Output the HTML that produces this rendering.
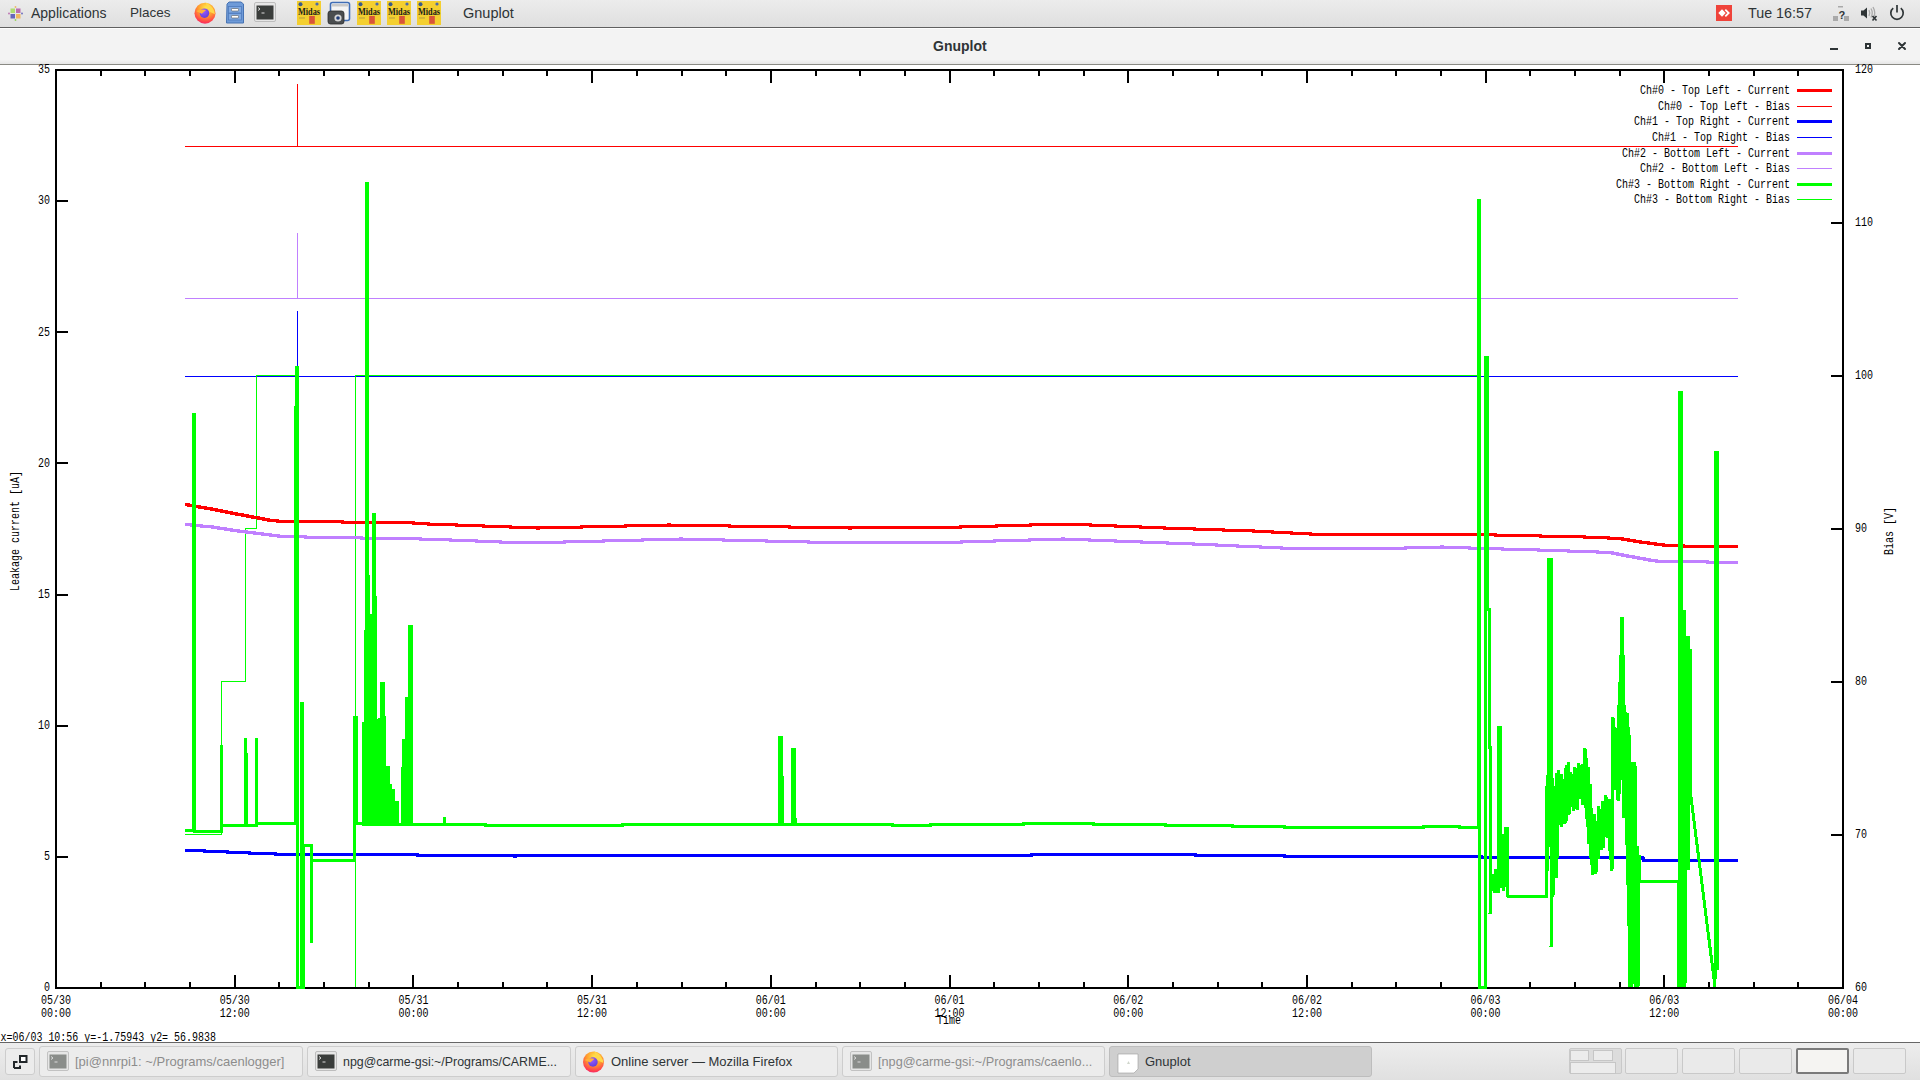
<!DOCTYPE html>
<html><head><meta charset="utf-8"><style>
html,body{margin:0;padding:0;width:1920px;height:1080px;overflow:hidden;background:#fff;font-family:"Liberation Sans",sans-serif;}
.abs{position:absolute;}
#top{left:0;top:0;width:1920px;height:27px;background:linear-gradient(#ececec,#dfdfdf);border-bottom:1px solid #606060;}
#title{left:0;top:28px;width:1920px;height:36px;background:linear-gradient(#f3f3f3 88%,#e6e6e6);border-top:1px solid #fdfdfd;box-sizing:border-box;}
#tline{left:0;top:64px;width:1920px;height:1px;background:#8a8a84;}
.tb{color:#2e3436;font-size:14px;top:4px;line-height:18px;white-space:nowrap;}
#bottom{left:0;top:1042px;width:1920px;height:38px;background:linear-gradient(#ededed,#e0e0e0);border-top:1px solid #666;box-sizing:border-box;}
.btn{top:1046px;height:31px;box-sizing:border-box;border:1px solid #cdcdcd;border-radius:3px;background:#ececec;font-size:13px;line-height:30px;color:#2e3436;white-space:nowrap;overflow:hidden;}
.ws{top:1048px;height:26px;width:53px;box-sizing:border-box;border:1px solid #c9c9c9;border-radius:2px;background:#eaeaea;}
svg{position:absolute;left:0;top:0;}
</style></head><body>
<div class="abs" id="top"></div>
<div class="abs" id="title"></div>
<div class="abs" id="tline"></div>
<div class="abs tb" style="left:31px;font-size:14px;">Applications</div>
<div class="abs tb" style="left:130px;font-size:13.5px;">Places</div>
<div class="abs tb" style="left:463px;font-size:14.5px;">Gnuplot</div>
<div class="abs tb" style="left:1748px;font-size:14.3px;">Tue 16:57</div>
<div class="abs" style="left:933px;top:37px;font-size:14px;font-weight:bold;color:#2e3436;line-height:18px;">Gnuplot</div>
<svg width="1920" height="1080" viewBox="0 0 1920 1080">
<g shape-rendering="crispEdges" stroke="#000" stroke-width="2" fill="none">
<path d="M56.0 70.0 H1843.0 V988.0 H56.0 Z"/>
<path d="M100.7 988.0 v-6 M100.7 70.0 v6 M145.3 988.0 v-6 M145.3 70.0 v6 M190.0 988.0 v-6 M190.0 70.0 v6 M234.7 988.0 v-13 M234.7 70.0 v13 M279.4 988.0 v-6 M279.4 70.0 v6 M324.1 988.0 v-6 M324.1 70.0 v6 M368.7 988.0 v-6 M368.7 70.0 v6 M413.4 988.0 v-13 M413.4 70.0 v13 M458.1 988.0 v-6 M458.1 70.0 v6 M502.8 988.0 v-6 M502.8 70.0 v6 M547.4 988.0 v-6 M547.4 70.0 v6 M592.1 988.0 v-13 M592.1 70.0 v13 M636.8 988.0 v-6 M636.8 70.0 v6 M681.5 988.0 v-6 M681.5 70.0 v6 M726.1 988.0 v-6 M726.1 70.0 v6 M770.8 988.0 v-13 M770.8 70.0 v13 M815.5 988.0 v-6 M815.5 70.0 v6 M860.1 988.0 v-6 M860.1 70.0 v6 M904.8 988.0 v-6 M904.8 70.0 v6 M949.5 988.0 v-13 M949.5 70.0 v13 M994.2 988.0 v-6 M994.2 70.0 v6 M1038.8 988.0 v-6 M1038.8 70.0 v6 M1083.5 988.0 v-6 M1083.5 70.0 v6 M1128.2 988.0 v-13 M1128.2 70.0 v13 M1172.9 988.0 v-6 M1172.9 70.0 v6 M1217.5 988.0 v-6 M1217.5 70.0 v6 M1262.2 988.0 v-6 M1262.2 70.0 v6 M1306.9 988.0 v-13 M1306.9 70.0 v13 M1351.6 988.0 v-6 M1351.6 70.0 v6 M1396.2 988.0 v-6 M1396.2 70.0 v6 M1440.9 988.0 v-6 M1440.9 70.0 v6 M1485.6 988.0 v-13 M1485.6 70.0 v13 M1530.3 988.0 v-6 M1530.3 70.0 v6 M1575.0 988.0 v-6 M1575.0 70.0 v6 M1619.6 988.0 v-6 M1619.6 70.0 v6 M1664.3 988.0 v-13 M1664.3 70.0 v13 M1709.0 988.0 v-6 M1709.0 70.0 v6 M1753.7 988.0 v-6 M1753.7 70.0 v6 M1798.3 988.0 v-6 M1798.3 70.0 v6 M56.0 856.9 h12 M56.0 725.7 h12 M56.0 594.6 h12 M56.0 463.4 h12 M56.0 332.3 h12 M56.0 201.1 h12 M1843.0 835.0 h-12 M1843.0 682.0 h-12 M1843.0 529.0 h-12 M1843.0 376.0 h-12 M1843.0 223.0 h-12"/>
</g>
<g font-family="Liberation Mono" font-size="13.5" fill="#000">
<text x="44.0" y="991.2" textLength="6.0" lengthAdjust="spacingAndGlyphs" >0</text>
<text x="44.0" y="860.1" textLength="6.0" lengthAdjust="spacingAndGlyphs" >5</text>
<text x="38.0" y="728.9" textLength="12.0" lengthAdjust="spacingAndGlyphs" >10</text>
<text x="38.0" y="597.8" textLength="12.0" lengthAdjust="spacingAndGlyphs" >15</text>
<text x="38.0" y="466.6" textLength="12.0" lengthAdjust="spacingAndGlyphs" >20</text>
<text x="38.0" y="335.5" textLength="12.0" lengthAdjust="spacingAndGlyphs" >25</text>
<text x="38.0" y="204.3" textLength="12.0" lengthAdjust="spacingAndGlyphs" >30</text>
<text x="38.0" y="73.2" textLength="12.0" lengthAdjust="spacingAndGlyphs" >35</text>
<text x="1855.0" y="991.2" textLength="12.0" lengthAdjust="spacingAndGlyphs" >60</text>
<text x="1855.0" y="838.2" textLength="12.0" lengthAdjust="spacingAndGlyphs" >70</text>
<text x="1855.0" y="685.2" textLength="12.0" lengthAdjust="spacingAndGlyphs" >80</text>
<text x="1855.0" y="532.2" textLength="12.0" lengthAdjust="spacingAndGlyphs" >90</text>
<text x="1855.0" y="379.2" textLength="18.0" lengthAdjust="spacingAndGlyphs" >100</text>
<text x="1855.0" y="226.2" textLength="18.0" lengthAdjust="spacingAndGlyphs" >110</text>
<text x="1855.0" y="73.2" textLength="18.0" lengthAdjust="spacingAndGlyphs" >120</text>
<text x="41.0" y="1004.0" textLength="30.0" lengthAdjust="spacingAndGlyphs" >05/30</text>
<text x="41.0" y="1017.0" textLength="30.0" lengthAdjust="spacingAndGlyphs" >00:00</text>
<text x="219.7" y="1004.0" textLength="30.0" lengthAdjust="spacingAndGlyphs" >05/30</text>
<text x="219.7" y="1017.0" textLength="30.0" lengthAdjust="spacingAndGlyphs" >12:00</text>
<text x="398.4" y="1004.0" textLength="30.0" lengthAdjust="spacingAndGlyphs" >05/31</text>
<text x="398.4" y="1017.0" textLength="30.0" lengthAdjust="spacingAndGlyphs" >00:00</text>
<text x="577.1" y="1004.0" textLength="30.0" lengthAdjust="spacingAndGlyphs" >05/31</text>
<text x="577.1" y="1017.0" textLength="30.0" lengthAdjust="spacingAndGlyphs" >12:00</text>
<text x="755.8" y="1004.0" textLength="30.0" lengthAdjust="spacingAndGlyphs" >06/01</text>
<text x="755.8" y="1017.0" textLength="30.0" lengthAdjust="spacingAndGlyphs" >00:00</text>
<text x="934.5" y="1004.0" textLength="30.0" lengthAdjust="spacingAndGlyphs" >06/01</text>
<text x="934.5" y="1017.0" textLength="30.0" lengthAdjust="spacingAndGlyphs" >12:00</text>
<text x="1113.2" y="1004.0" textLength="30.0" lengthAdjust="spacingAndGlyphs" >06/02</text>
<text x="1113.2" y="1017.0" textLength="30.0" lengthAdjust="spacingAndGlyphs" >00:00</text>
<text x="1291.9" y="1004.0" textLength="30.0" lengthAdjust="spacingAndGlyphs" >06/02</text>
<text x="1291.9" y="1017.0" textLength="30.0" lengthAdjust="spacingAndGlyphs" >12:00</text>
<text x="1470.6" y="1004.0" textLength="30.0" lengthAdjust="spacingAndGlyphs" >06/03</text>
<text x="1470.6" y="1017.0" textLength="30.0" lengthAdjust="spacingAndGlyphs" >00:00</text>
<text x="1649.3" y="1004.0" textLength="30.0" lengthAdjust="spacingAndGlyphs" >06/03</text>
<text x="1649.3" y="1017.0" textLength="30.0" lengthAdjust="spacingAndGlyphs" >12:00</text>
<text x="1828.0" y="1004.0" textLength="30.0" lengthAdjust="spacingAndGlyphs" >06/04</text>
<text x="1828.0" y="1017.0" textLength="30.0" lengthAdjust="spacingAndGlyphs" >00:00</text>
<text x="937.0" y="1024.0" textLength="24.0" lengthAdjust="spacingAndGlyphs" >Time</text>
<g transform="translate(18.6,531) rotate(-90)"><text x="-60.0" y="0.0" textLength="120.0" lengthAdjust="spacingAndGlyphs" >Leakage current [uA]</text></g>
<g transform="translate(1892.6,531) rotate(-90)"><text x="-24.0" y="0.0" textLength="48.0" lengthAdjust="spacingAndGlyphs" >Bias [V]</text></g>
<text x="1640.0" y="93.6" textLength="150.0" lengthAdjust="spacingAndGlyphs" >Ch#0 - Top Left - Current</text>
<text x="1658.0" y="109.6" textLength="132.0" lengthAdjust="spacingAndGlyphs" >Ch#0 - Top Left - Bias</text>
<text x="1634.0" y="124.6" textLength="156.0" lengthAdjust="spacingAndGlyphs" >Ch#1 - Top Right - Current</text>
<text x="1652.0" y="140.6" textLength="138.0" lengthAdjust="spacingAndGlyphs" >Ch#1 - Top Right - Bias</text>
<text x="1622.0" y="156.6" textLength="168.0" lengthAdjust="spacingAndGlyphs" >Ch#2 - Bottom Left - Current</text>
<text x="1640.0" y="171.6" textLength="150.0" lengthAdjust="spacingAndGlyphs" >Ch#2 - Bottom Left - Bias</text>
<text x="1616.0" y="187.6" textLength="174.0" lengthAdjust="spacingAndGlyphs" >Ch#3 - Bottom Right - Current</text>
<text x="1634.0" y="202.6" textLength="156.0" lengthAdjust="spacingAndGlyphs" >Ch#3 - Bottom Right - Bias</text>
</g>
<g shape-rendering="crispEdges" fill="none">
<path d="M1797 90.5 H1832" stroke="#ff0000" stroke-width="3"/>
<path d="M1797 106.5 H1832" stroke="#ff0000" stroke-width="1"/>
<path d="M1797 121.5 H1832" stroke="#0000ff" stroke-width="3"/>
<path d="M1797 137.5 H1832" stroke="#0000ff" stroke-width="1"/>
<path d="M1797 153.5 H1832" stroke="#c080ff" stroke-width="3"/>
<path d="M1797 168.5 H1832" stroke="#c080ff" stroke-width="1"/>
<path d="M1797 184.5 H1832" stroke="#00ff00" stroke-width="3"/>
<path d="M1797 199.5 H1832" stroke="#00ff00" stroke-width="1"/>
</g>
<g fill="none" stroke-width="1" shape-rendering="crispEdges">
<path d="M185 146.5 H1738 M297.5 146.5 V84" stroke="#ff0000"/>
<path d="M185 298.5 H1738 M297.5 298.5 V233" stroke="#c080ff"/>
<path d="M185 376.5 H1738 M297.5 376.5 V311" stroke="#0000ff"/>
<path d="M185.0 834.5 L221.5 834.5 L221.5 681.5 L245.5 681.5 L245.5 528.5 L256.5 528.5 L256.5 375.5 L296.5 375.5 L296.5 987.0 M355.5 987.0 L355.5 375.5 L1478.5 375.5 L1478.5 987.0" stroke="#00ff00"/>
</g>
<g fill="none" stroke-width="3" shape-rendering="crispEdges" stroke-linejoin="miter">
<path d="M185.0 504.5 L188.0 504.5 L188.0 505.5 L194.0 505.5 L194.0 506.5 L199.0 506.5 L199.0 507.5 L205.0 507.5 L205.0 508.5 L211.0 508.5 L211.0 509.5 L216.0 509.5 L216.0 510.5 L221.0 510.5 L221.0 511.5 L226.0 511.5 L226.0 512.5 L231.0 512.5 L231.0 513.5 L236.0 513.5 L236.0 514.5 L242.0 514.5 L242.0 515.5 L247.0 515.5 L247.0 516.5 L252.0 516.5 L252.0 517.5 L258.0 517.5 L258.0 518.5 L263.0 518.5 L263.0 519.5 L268.0 519.5 L268.0 520.5 L277.0 520.5 L277.0 521.5 L342.0 521.5 L342.0 522.5 L413.0 522.5 L413.0 523.5 L428.0 523.5 L428.0 524.5 L456.0 524.5 L456.0 525.5 L483.0 525.5 L483.0 526.5 L510.0 526.5 L510.0 527.5 L537.0 527.5 L537.0 528.5 L538.0 528.5 L538.0 527.5 L581.0 527.5 L581.0 526.5 L625.0 526.5 L625.0 525.5 L668.0 525.5 L668.0 524.5 L669.0 524.5 L669.0 525.5 L729.0 525.5 L729.0 526.5 L789.0 526.5 L789.0 527.5 L849.0 527.5 L849.0 528.5 L850.0 528.5 L850.0 527.5 L960.0 527.5 L960.0 526.5 L996.0 526.5 L996.0 525.5 L1030.0 525.5 L1030.0 524.5 L1090.0 524.5 L1090.0 525.5 L1115.0 525.5 L1115.0 526.5 L1140.0 526.5 L1140.0 527.5 L1164.0 527.5 L1164.0 528.5 L1194.0 528.5 L1194.0 529.5 L1223.0 529.5 L1223.0 530.5 L1253.0 530.5 L1253.0 531.5 L1272.0 531.5 L1272.0 532.5 L1291.0 532.5 L1291.0 533.5 L1310.0 533.5 L1310.0 534.5 L1495.0 534.5 L1495.0 535.5 L1540.0 535.5 L1540.0 536.5 L1584.0 536.5 L1584.0 537.5 L1608.0 537.5 L1608.0 538.5 L1622.0 538.5 L1622.0 539.5 L1628.0 539.5 L1628.0 540.5 L1634.0 540.5 L1634.0 541.5 L1640.0 541.5 L1640.0 542.5 L1648.0 542.5 L1648.0 543.5 L1655.0 543.5 L1655.0 544.5 L1663.0 544.5 L1663.0 545.5 L1683.0 545.5 L1683.0 546.5 L1738.0 546.5" stroke="#ff0000"/>
<path d="M185.0 524.5 L191.0 524.5 L191.0 525.5 L201.0 525.5 L201.0 526.5 L212.0 526.5 L212.0 527.5 L218.0 527.5 L218.0 528.5 L225.0 528.5 L225.0 529.5 L231.0 529.5 L231.0 530.5 L238.0 530.5 L238.0 531.5 L246.0 531.5 L246.0 532.5 L254.0 532.5 L254.0 533.5 L262.0 533.5 L262.0 534.5 L270.0 534.5 L270.0 535.5 L278.0 535.5 L278.0 536.5 L305.0 536.5 L305.0 537.5 L361.0 537.5 L361.0 538.5 L420.0 538.5 L420.0 539.5 L450.0 539.5 L450.0 540.5 L476.0 540.5 L476.0 541.5 L500.0 541.5 L500.0 542.5 L564.0 542.5 L564.0 541.5 L603.0 541.5 L603.0 540.5 L642.0 540.5 L642.0 539.5 L680.0 539.5 L680.0 538.5 L681.0 538.5 L681.0 539.5 L723.0 539.5 L723.0 540.5 L766.0 540.5 L766.0 541.5 L808.0 541.5 L808.0 542.5 L961.0 542.5 L961.0 541.5 L994.0 541.5 L994.0 540.5 L1029.0 540.5 L1029.0 539.5 L1062.0 539.5 L1062.0 538.5 L1063.0 538.5 L1063.0 539.5 L1089.0 539.5 L1089.0 540.5 L1115.0 540.5 L1115.0 541.5 L1141.0 541.5 L1141.0 542.5 L1167.0 542.5 L1167.0 543.5 L1193.0 543.5 L1193.0 544.5 L1216.0 544.5 L1216.0 545.5 L1237.0 545.5 L1237.0 546.5 L1260.0 546.5 L1260.0 547.5 L1281.0 547.5 L1281.0 548.5 L1405.0 548.5 L1405.0 547.5 L1441.0 547.5 L1441.0 546.5 L1442.0 546.5 L1442.0 547.5 L1469.0 547.5 L1469.0 548.5 L1502.0 548.5 L1502.0 549.5 L1538.0 549.5 L1538.0 550.5 L1568.0 550.5 L1568.0 551.5 L1597.0 551.5 L1597.0 552.5 L1612.0 552.5 L1612.0 553.5 L1617.0 553.5 L1617.0 554.5 L1622.0 554.5 L1622.0 555.5 L1627.0 555.5 L1627.0 556.5 L1633.0 556.5 L1633.0 557.5 L1638.0 557.5 L1638.0 558.5 L1644.0 558.5 L1644.0 559.5 L1649.0 559.5 L1649.0 560.5 L1656.0 560.5 L1656.0 561.5 L1707.0 561.5 L1707.0 562.5 L1738.0 562.5" stroke="#c080ff"/>
<path d="M185.0 850.5 L204.0 850.5 L204.0 851.5 L227.0 851.5 L227.0 852.5 L249.0 852.5 L249.0 853.5 L275.0 853.5 L275.0 854.5 L417.0 854.5 L417.0 855.5 L514.0 855.5 L514.0 856.5 L515.0 856.5 L515.0 855.5 L1031.0 855.5 L1031.0 854.5 L1195.0 854.5 L1195.0 855.5 L1284.0 855.5 L1284.0 856.5 L1481.0 856.5 L1481.0 857.5 L1642.0 857.5 L1642.0 858.5 L1643.0 858.5 L1643.0 860.5 L1738.0 860.5" stroke="#0000ff"/>
<path d="M185.0 830.5 L194.0 830.5 L193.5 831.5 L193.5 414.0 L194.5 414.0 L194.5 831.5 L221.0 831.5 L221.0 825.5 L221.0 746.0 L221.2 746.0 L221.2 825.5 L245.0 825.5 L245.0 739.0 L245.5 739.0 L246.0 754.0 L246.5 754.0 L246.5 825.5 L256.0 825.5 L256.0 823.5 L256.0 739.0 L256.2 739.0 L256.2 823.5 L295.0 823.5 L295.0 407.0 L296.0 407.0 L296.0 367.0 L297.0 367.0 L297.0 987.0 L301.0 987.0 L301.0 703.0 L302.0 703.0 L302.0 987.0 L303.0 987.0 L303.0 845.5 L311.0 845.5 L311.0 943.0 L311.0 860.5 L354.0 860.5 L354.0 769.0 L355.0 717.0 L356.0 717.0 L356.0 823.5 L363.0 823.5 L363.0 824.5 L363.0 723.0 L363.5 723.0 L363.5 824.5 L364.0 824.5 L364.0 723.0 L364.5 723.0 L364.5 760.0 L365.0 824.5 L365.0 631.0 L365.5 631.0 L365.5 824.5 L366.0 824.5 L366.0 183.0 L366.5 183.0 L366.5 760.0 L367.0 824.5 L367.0 183.0 L367.5 183.0 L367.5 824.5 L368.0 824.5 L368.0 576.0 L368.5 576.0 L368.5 760.0 L369.0 824.5 L369.0 615.0 L369.5 615.0 L369.5 824.5 L370.0 824.5 L370.0 615.0 L370.5 615.0 L370.5 760.0 L371.0 824.5 L371.0 619.0 L371.5 619.0 L371.5 824.5 L372.0 824.5 L372.0 619.0 L372.5 619.0 L372.5 760.0 L373.0 824.5 L373.0 514.0 L373.5 514.0 L373.5 824.5 L374.0 824.5 L374.0 514.0 L374.5 514.0 L374.5 760.0 L375.0 824.5 L375.0 597.0 L375.5 597.0 L375.5 824.5 L376.0 824.5 L376.0 720.0 L376.5 720.0 L376.5 760.0 L377.0 824.5 L377.0 729.0 L377.5 729.0 L377.5 824.5 L378.0 824.5 L378.0 729.0 L378.5 729.0 L378.5 760.0 L379.0 824.5 L379.0 719.0 L379.5 719.0 L379.5 824.5 L380.0 824.5 L380.0 719.0 L380.5 719.0 L380.5 760.0 L381.0 824.5 L381.0 683.0 L381.5 683.0 L381.5 824.5 L382.0 824.5 L382.0 683.0 L382.5 683.0 L382.5 760.0 L383.0 824.5 L383.0 683.0 L383.5 683.0 L383.5 824.5 L384.0 824.5 L384.0 717.0 L384.5 717.0 L384.5 760.0 L385.0 824.5 L386.0 824.5 L386.0 767.0 L386.6 767.0 L386.6 824.5 L387.0 824.5 L387.0 767.0 L387.6 767.0 L387.6 824.5 L388.0 824.5 L388.0 767.0 L388.6 767.0 L388.6 824.5 L389.0 824.5 L389.0 785.0 L389.6 785.0 L389.6 824.5 L390.0 824.5 L390.0 785.0 L390.6 785.0 L390.6 824.5 L391.0 824.5 L391.0 790.0 L391.6 790.0 L391.6 824.5 L392.0 824.5 L392.0 790.0 L392.6 790.0 L392.6 824.5 L393.0 824.5 L393.0 790.0 L393.6 790.0 L393.6 824.5 L395.0 824.5 L395.0 802.0 L395.6 802.0 L395.6 824.5 L396.0 824.5 L396.0 802.0 L396.6 802.0 L396.6 824.5 L397.0 824.5 L397.0 802.0 L397.6 802.0 L397.6 824.5 L399.0 824.5 L402.0 824.5 L402.0 824.5 L402.0 768.0 L402.6 768.0 L402.6 824.5 L403.0 824.5 L403.0 740.0 L403.6 740.0 L403.6 824.5 L404.0 824.5 L404.0 740.0 L404.6 740.0 L404.6 824.5 L405.0 824.5 L405.0 740.0 L405.6 740.0 L405.6 824.5 L406.0 824.5 L406.0 698.0 L406.6 698.0 L406.6 824.5 L407.0 824.5 L407.0 698.0 L407.6 698.0 L407.6 824.5 L408.0 824.5 L408.0 698.0 L408.6 698.0 L408.6 824.5 L409.0 824.5 L409.0 626.0 L409.6 626.0 L409.6 824.5 L410.0 824.5 L410.0 626.0 L410.6 626.0 L410.6 824.5 L411.0 824.5 L411.0 626.0 L411.6 626.0 L411.6 824.5 L412.0 824.5 L444.0 824.5 L444.0 824.5 L444.0 818.0 L444.2 818.0 L444.2 824.5 L485.0 824.5 L485.0 825.5 L622.0 825.5 L622.0 824.5 L779.0 824.5 L779.0 737.0 L781.0 737.0 L781.0 777.0 L782.0 777.0 L782.0 824.5 L792.0 824.5 L792.0 749.0 L794.0 749.0 L794.0 819.0 L795.0 819.0 L795.0 824.5 L892.0 824.5 L892.0 825.5 L930.0 825.5 L930.0 824.5 L1023.0 824.5 L1023.0 823.5 L1093.0 823.5 L1093.0 824.5 L1165.0 824.5 L1165.0 825.5 L1232.0 825.5 L1232.0 826.5 L1284.0 826.5 L1284.0 827.5 L1423.0 827.5 L1423.0 826.5 L1459.0 826.5 L1459.0 827.5 L1477.0 827.5 L1478.0 827.5 L1478.0 200.0 L1479.0 200.0 L1479.0 987.0 L1485.0 987.0 L1485.0 357.0 L1487.0 357.0 L1487.0 609.0 L1489.0 609.0 L1489.0 747.0 L1490.0 747.0 L1490.0 914.0 L1491.0 880.0 L1491.0 873.7 L1491.5 889.1 L1492.0 873.9 L1492.5 888.7 L1493.0 875.7 L1493.5 890.5 L1494.0 875.8 L1494.5 892.6 L1495.0 877.1 L1495.5 887.8 L1496.0 869.1 L1496.5 892.5 L1497.0 871.0 L1497.5 889.1 L1498.0 893.0 L1498.0 727.0 L1500.0 727.0 L1500.0 880.0 L1500.0 869.7 L1500.5 884.5 L1501.0 860.0 L1501.5 888.3 L1502.0 858.5 L1502.5 878.6 L1503.0 835.1 L1503.5 891.4 L1504.0 834.3 L1504.5 883.4 L1505.0 841.3 L1505.5 887.4 L1506.0 827.2 L1506.5 881.7 L1507.0 827.5 L1507.5 885.1 L1508.0 896.5 L1546.0 896.5 L1546.0 787.0 L1546.0 797.8 L1546.3 853.2 L1546.7 786.2 L1547.0 874.3 L1547.4 774.8 L1547.7 856.8 L1548.1 788.9 L1548.4 846.6 L1548.8 776.3 L1549.0 559.0 L1551.0 559.0 L1551.0 947.0 L1552.0 860.0 L1552.0 778.5 L1552.3 834.7 L1552.7 797.9 L1552.0 795.0 L1553.0 897.0 L1554.0 800.0 L1555.0 786.4 L1555.4 867.4 L1555.8 808.6 L1556.2 878.4 L1556.6 773.2 L1557.0 860.3 L1557.4 777.7 L1557.8 819.7 L1558.2 770.0 L1558.6 817.1 L1559.0 779.9 L1559.4 825.2 L1559.8 778.4 L1560.2 824.3 L1560.6 781.8 L1561.0 805.7 L1561.4 774.1 L1561.8 826.5 L1562.2 783.4 L1562.6 812.1 L1563.0 780.6 L1563.4 822.1 L1563.8 778.7 L1564.2 823.7 L1564.6 782.4 L1565.0 822.5 L1565.4 768.1 L1565.8 822.9 L1566.2 765.1 L1566.6 820.5 L1567.0 765.9 L1567.4 808.2 L1567.8 777.3 L1568.2 815.2 L1568.6 761.8 L1569.0 807.2 L1569.4 783.3 L1569.8 813.5 L1570.2 777.0 L1570.6 804.4 L1571.0 771.7 L1571.4 806.5 L1571.8 774.9 L1572.2 805.6 L1572.6 774.3 L1573.0 805.5 L1573.4 776.8 L1573.8 811.1 L1574.2 767.5 L1574.6 808.8 L1575.0 773.4 L1575.4 801.6 L1575.8 768.3 L1576.2 806.3 L1576.6 777.4 L1577.0 801.6 L1577.4 772.9 L1577.8 809.6 L1578.2 771.2 L1578.6 795.9 L1579.0 763.3 L1579.4 798.6 L1579.8 766.5 L1580.2 797.9 L1580.6 776.7 L1581.0 798.1 L1581.4 767.1 L1581.8 793.8 L1582.2 764.2 L1582.6 805.4 L1583.0 764.4 L1583.4 795.0 L1583.8 772.3 L1585.0 748.0 L1586.0 808.0 L1586.0 757.6 L1586.4 819.4 L1586.8 768.3 L1587.2 820.1 L1587.6 783.9 L1588.0 827.2 L1588.4 767.5 L1588.8 844.3 L1589.2 787.4 L1589.6 831.1 L1590.0 784.1 L1590.4 858.3 L1590.8 795.0 L1591.2 864.5 L1591.6 808.5 L1592.0 856.2 L1592.4 829.2 L1592.8 874.5 L1593.2 815.9 L1593.6 868.5 L1594.0 814.3 L1594.4 870.1 L1594.8 821.0 L1595.2 858.7 L1595.6 826.1 L1596.0 873.5 L1596.4 822.8 L1596.8 863.1 L1597.2 825.8 L1597.6 858.8 L1598.0 821.5 L1598.4 859.2 L1598.8 806.5 L1599.2 848.1 L1599.6 817.4 L1600.0 843.8 L1600.4 821.9 L1600.8 843.6 L1601.2 819.2 L1601.6 849.6 L1602.0 809.0 L1602.4 838.8 L1602.8 800.9 L1603.2 848.4 L1603.6 803.0 L1604.0 833.3 L1604.4 801.2 L1604.8 833.7 L1605.2 808.1 L1605.6 837.2 L1606.0 795.1 L1606.4 836.1 L1606.8 805.0 L1607.2 835.7 L1607.6 799.6 L1608.0 838.1 L1608.4 806.5 L1608.8 832.0 L1609.2 799.4 L1609.6 851.2 L1610.0 800.0 L1610.4 860.3 L1610.8 801.4 L1611.2 844.1 L1611.6 801.8 L1612.0 871.0 L1613.0 717.0 L1614.0 760.0 L1615.0 727.0 L1616.0 790.0 L1617.0 731.0 L1618.0 800.0 L1618.0 705.4 L1618.4 800.5 L1618.8 725.0 L1619.2 794.1 L1619.6 682.1 L1620.0 764.6 L1620.4 655.4 L1620.8 776.8 L1621.5 618.0 L1622.5 618.0 L1623.0 780.0 L1623.0 655.1 L1623.4 817.7 L1623.8 671.8 L1624.2 801.7 L1624.6 705.0 L1625.0 783.7 L1625.4 711.9 L1625.8 810.5 L1626.2 721.1 L1626.6 845.1 L1627.0 713.2 L1627.4 884.9 L1627.8 753.0 L1628.2 926.4 L1628.6 727.0 L1629.0 906.7 L1629.4 735.3 L1629.8 895.6 L1630.0 987.0 L1631.0 840.0 L1632.0 987.0 L1633.0 763.0 L1635.0 763.0 L1636.0 987.0 L1637.0 846.0 L1638.0 987.0 L1639.0 855.0 L1640.0 881.5 L1678.0 881.5 L1679.0 987.0 L1680.0 392.0 L1681.0 392.0 L1681.0 987.0 L1682.0 611.0 L1684.0 611.0 L1684.0 900.0 L1685.0 987.0 L1686.0 637.0 L1688.0 637.0 L1688.0 870.0 L1689.0 650.0 L1690.0 650.0 L1690.0 789.0 L1715.0 987.0 L1716.0 452.0 L1717.0 452.0 L1717.0 970.0 L1716.0 829.0" stroke="#00ff00"/>
</g>
<text x="0.5" y="1041" font-family="Liberation Mono" font-size="12.5" textLength="215.5" lengthAdjust="spacingAndGlyphs" fill="#000">x=06/03 10:56 y=-1.75943 y2= 56.9838</text>
</svg>

<div class="abs" id="bottom"></div>
<div class="abs btn" style="left:5px;width:30px;top:1048px;height:27px;"></div>
<div class="abs btn" style="left:39px;width:264px;color:#8c8c8c;padding-left:35px;">[pi@nnrpi1: ~/Programs/caenlogger]</div>
<div class="abs btn" style="left:307px;width:264px;padding-left:35px;font-size:12.4px;">npg@carme-gsi:~/Programs/CARME...</div>
<div class="abs btn" style="left:575px;width:263px;padding-left:35px;">Online server — Mozilla Firefox</div>
<div class="abs btn" style="left:842px;width:263px;color:#8c8c8c;padding-left:35px;font-size:12.7px;">[npg@carme-gsi:~/Programs/caenlo...</div>
<div class="abs btn" style="left:1109px;width:263px;background:#cfcfcf;border-color:#bdbdbd;padding-left:35px;">Gnuplot</div>
<div class="abs ws" style="left:1569px;background:#dcdcdc;"></div><div class="abs" style="left:1570px;top:1050px;width:19px;height:11px;box-sizing:border-box;border:1px solid #c6c6c6;background:#ececec;"></div><div class="abs" style="left:1593px;top:1050px;width:20px;height:11px;box-sizing:border-box;border:1px solid #c6c6c6;background:#ececec;"></div><div class="abs" style="left:1570px;top:1062px;width:46px;height:12px;box-sizing:border-box;border:1px solid #c6c6c6;background:#ececec;"></div>
<div class="abs ws" style="left:1625px;"></div>
<div class="abs ws" style="left:1682px;"></div>
<div class="abs ws" style="left:1739px;"></div>
<div class="abs ws" style="left:1796px;border:2px solid #7a7a7a;background:#f5f4f2;"></div>
<div class="abs ws" style="left:1853px;"></div>
<svg width="1920" height="1080" viewBox="0 0 1920 1080"><g opacity="0.85"><rect x="10.5" y="8.5" width="4.5" height="4.5" fill="#a6dc5c"/><rect x="16" y="8.5" width="4.5" height="4.5" fill="#b45aa6"/><rect x="10.5" y="14" width="4.5" height="4.5" fill="#5252b4"/><rect x="16" y="14" width="4.5" height="4.5" fill="#f2b04a"/><circle cx="15.5" cy="7" r="0.9" fill="#f2b04a"/><circle cx="15.5" cy="20" r="0.9" fill="#8ad040"/><circle cx="9" cy="13.5" r="0.9" fill="#b45aa6"/><circle cx="22" cy="13.5" r="0.9" fill="#5252b4"/></g>
<defs><radialGradient id="ffoa" cx="0.55" cy="0.25" r="0.85"><stop offset="0" stop-color="#ffe94a"/><stop offset="0.45" stop-color="#ff9a2e"/><stop offset="0.8" stop-color="#ff3d4f"/><stop offset="1" stop-color="#e8198b"/></radialGradient>
<radialGradient id="ffpa" cx="0.4" cy="0.3" r="0.8"><stop offset="0" stop-color="#9b5cff"/><stop offset="1" stop-color="#5b3bd6"/></radialGradient></defs>
<circle cx="205" cy="13.2" r="10.5" fill="url(#ffoa)"/>
<path d="M205.525 2.174999999999999 Q214.45 6.8999999999999995 214.975 14.25 L208.15 11.1 Z" fill="#ffd84a"/>
<circle cx="204.475" cy="13.2" r="4.7250000000000005" fill="url(#ffpa)"/>
<path d="M196.075 11.1 Q200.8 8.474999999999998 206.05 10.049999999999999 L201.85 13.725 Z" fill="#ffb23a"/>
<g><path d="M227 4 L229 2 H241 L243.5 4 V23 H226.5 Z" fill="#6f9bd8" stroke="#4773b3" stroke-width="1"/>
<rect x="228.5" y="6.5" width="13" height="6.5" fill="#7fa8e0" stroke="#4f7bbd" stroke-width="0.8"/><rect x="228.5" y="13.5" width="13" height="6.5" fill="#7fa8e0" stroke="#4f7bbd" stroke-width="0.8"/>
<rect x="231.5" y="8.5" width="7" height="2.5" rx="0.8" fill="#fff" stroke="#555" stroke-width="0.6"/><rect x="231.5" y="15.5" width="7" height="2.5" rx="0.8" fill="#fff" stroke="#555" stroke-width="0.6"/></g>
<rect x="254.5" y="2.5" width="21" height="19" rx="1.5" fill="#e6e6e6" stroke="#bdbdbd" stroke-width="1"/>
<rect x="256.5" y="5.5" width="17" height="14" fill="#3a3d3b"/>
<path d="M258.0 7.5 l2 1.5 l-2 1.5" stroke="#dcdcdc" stroke-width="1" fill="none"/>
<rect x="261.5" y="12.5" width="3" height="1" fill="#dcdcdc"/>
<rect x="297" y="1" width="24" height="24" fill="#f4cf30"/>
<circle cx="300.5" cy="4.3" r="2" fill="#3a5a8a"/><circle cx="317" cy="4" r="1.6" fill="#4a6aaa"/>
<text x="298" y="15" font-family="Liberation Serif" font-size="10" font-weight="bold" fill="#1a1a1a" textLength="22" lengthAdjust="spacingAndGlyphs">Midas</text>
<rect x="309.2" y="16" width="5.6" height="7.8" fill="#d9553a"/><rect x="299" y="17.5" width="6" height="1" fill="#b8a040"/>
<g><rect x="330.5" y="2.5" width="19" height="18" rx="2" fill="#f4f4f4" stroke="#3f6db5" stroke-width="1.6"/><rect x="332" y="4" width="16" height="2.5" fill="#c9c9c9"/>
<rect x="328" y="11" width="16" height="13" rx="2.5" fill="#4a4d4f" stroke="#2b2b2b" stroke-width="0.8"/><circle cx="338" cy="18" r="3.6" fill="#d5d5d5"/><circle cx="338" cy="18" r="1.8" fill="#1f3c78"/></g>
<rect x="357" y="1" width="24" height="24" fill="#f4cf30"/>
<circle cx="360.5" cy="4.3" r="2" fill="#3a5a8a"/><circle cx="377" cy="4" r="1.6" fill="#4a6aaa"/>
<text x="358" y="15" font-family="Liberation Serif" font-size="10" font-weight="bold" fill="#1a1a1a" textLength="22" lengthAdjust="spacingAndGlyphs">Midas</text>
<rect x="369.2" y="16" width="5.6" height="7.8" fill="#d9553a"/><rect x="359" y="17.5" width="6" height="1" fill="#b8a040"/>
<rect x="387" y="1" width="24" height="24" fill="#f4cf30"/>
<circle cx="390.5" cy="4.3" r="2" fill="#3a5a8a"/><circle cx="407" cy="4" r="1.6" fill="#4a6aaa"/>
<text x="388" y="15" font-family="Liberation Serif" font-size="10" font-weight="bold" fill="#1a1a1a" textLength="22" lengthAdjust="spacingAndGlyphs">Midas</text>
<rect x="399.2" y="16" width="5.6" height="7.8" fill="#d9553a"/><rect x="389" y="17.5" width="6" height="1" fill="#b8a040"/>
<rect x="417" y="1" width="24" height="24" fill="#f4cf30"/>
<circle cx="420.5" cy="4.3" r="2" fill="#3a5a8a"/><circle cx="437" cy="4" r="1.6" fill="#4a6aaa"/>
<text x="418" y="15" font-family="Liberation Serif" font-size="10" font-weight="bold" fill="#1a1a1a" textLength="22" lengthAdjust="spacingAndGlyphs">Midas</text>
<rect x="429.2" y="16" width="5.6" height="7.8" fill="#d9553a"/><rect x="419" y="17.5" width="6" height="1" fill="#b8a040"/>
<g><rect x="1716" y="5" width="16" height="16" fill="#ef433a"/><path d="M1718.3 13 L1722 9.3 L1725.7 13 L1722 16.7 Z" fill="#fff"/><path d="M1725.3 9.6 L1728.7 13 L1725.3 16.4" stroke="#fff" stroke-width="1.8" fill="none"/></g>
<g fill="#a9a9a9"><rect x="1833" y="16" width="5" height="5"/><rect x="1844" y="16" width="5" height="5"/><rect x="1838" y="6" width="5" height="1.5"/></g><text x="1838.5" y="19" font-family="Liberation Sans" font-weight="bold" font-size="11" fill="#2e3436">?</text>
<g><path d="M1861 10.5 H1863.5 L1867 7.5 V18.5 L1863.5 15.5 H1861 Z" fill="#2e3436"/><path d="M1869 10 Q1870.5 13 1869 16 M1871 8.5 Q1873.5 13 1871 17.5 M1873 7 Q1876.5 13 1873 19" stroke="#a9a9a9" stroke-width="1.3" fill="none"/><path d="M1872.5 16 L1876.5 20.5 M1876.5 16 L1872.5 20.5" stroke="#2e3436" stroke-width="1.6"/></g>
<g fill="none" stroke="#2e3436" stroke-width="1.7"><path d="M1893.2 8.2 A6.2 6.2 0 1 0 1900.8 8.2"/><path d="M1897 5 V12.5"/></g>
<g fill="#2e3436"><rect x="1830" y="48" width="8" height="2"/></g><rect x="1866" y="44" width="4" height="4" fill="none" stroke="#2e3436" stroke-width="2"/><path d="M1899 43 L1905 49 M1905 43 L1899 49" stroke="#2e3436" stroke-width="2" stroke-linecap="round"/>
<g><rect x="20" y="1056" width="6.5" height="6" fill="#fff" stroke="#22272a" stroke-width="2"/><path d="M14 1068 V1062 H17.5 M20 1065.5 V1068 H14" stroke="#22272a" stroke-width="2" fill="none"/></g>
<rect x="47.5" y="1051.5" width="21" height="19" rx="1.5" fill="#e6e6e6" stroke="#c2c2c2" stroke-width="1"/>
<rect x="49.5" y="1054.5" width="17" height="14" fill="#8a8d8a"/>
<path d="M51.0 1056.5 l2 1.5 l-2 1.5" stroke="#dcdcdc" stroke-width="1" fill="none"/>
<rect x="54.5" y="1061.5" width="3" height="1" fill="#dcdcdc"/>
<rect x="315.5" y="1051.5" width="21" height="19" rx="1.5" fill="#e6e6e6" stroke="#bdbdbd" stroke-width="1"/>
<rect x="317.5" y="1054.5" width="17" height="14" fill="#3a3d3b"/>
<path d="M319.0 1056.5 l2 1.5 l-2 1.5" stroke="#dcdcdc" stroke-width="1" fill="none"/>
<rect x="322.5" y="1061.5" width="3" height="1" fill="#dcdcdc"/>
<defs><radialGradient id="ffob" cx="0.55" cy="0.25" r="0.85"><stop offset="0" stop-color="#ffe94a"/><stop offset="0.45" stop-color="#ff9a2e"/><stop offset="0.8" stop-color="#ff3d4f"/><stop offset="1" stop-color="#e8198b"/></radialGradient>
<radialGradient id="ffpb" cx="0.4" cy="0.3" r="0.8"><stop offset="0" stop-color="#9b5cff"/><stop offset="1" stop-color="#5b3bd6"/></radialGradient></defs>
<circle cx="593.5" cy="1062" r="10.5" fill="url(#ffob)"/>
<path d="M594.025 1050.975 Q602.95 1055.7 603.475 1063.05 L596.65 1059.9 Z" fill="#ffd84a"/>
<circle cx="592.975" cy="1062" r="4.7250000000000005" fill="url(#ffpb)"/>
<path d="M584.575 1059.9 Q589.3 1057.275 594.55 1058.85 L590.35 1062.525 Z" fill="#ffb23a"/>
<rect x="850.5" y="1051.5" width="21" height="19" rx="1.5" fill="#e6e6e6" stroke="#c2c2c2" stroke-width="1"/>
<rect x="852.5" y="1054.5" width="17" height="14" fill="#8a8d8a"/>
<path d="M854.0 1056.5 l2 1.5 l-2 1.5" stroke="#dcdcdc" stroke-width="1" fill="none"/>
<rect x="857.5" y="1061.5" width="3" height="1" fill="#dcdcdc"/>
<g><path d="M1118 1054 H1138 V1069 L1134 1073 H1118 Z" fill="#ffffff" stroke="#9a9a9a" stroke-width="0.6"/><path d="M1127 1064 L1128.5 1061 L1130 1064 Z" fill="#d0d6cc"/></g></svg>
</body></html>
